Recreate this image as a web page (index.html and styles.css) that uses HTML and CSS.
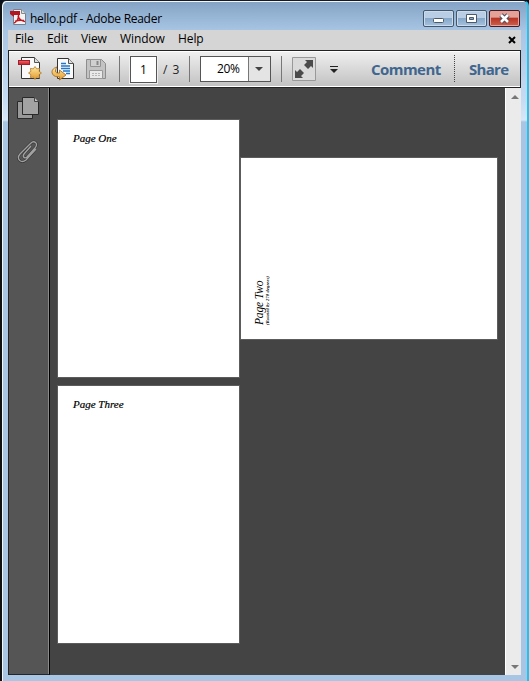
FILE: index.html
```
<!DOCTYPE html>
<html lang="en">
<head>
<meta charset="utf-8">
<title>hello.pdf - Adobe Reader</title>
<link rel="stylesheet" href="styles.css">
</head>
<body>
<div class="window">
  <header class="titlebar">
    <svg class="app-icon" width="17" height="17" viewBox="0 0 17 17">
      <path d="M3.500.5h8l4 4v11h-12z" fill="#f4f4f4" stroke="#77808c"/>
      <path d="M11.500.5v4h4" fill="#ddd" stroke="#888"/>
      <path d="M0 2h10v4H4v2L0 5z" fill="#b31820"/>
      <path d="M4 14c3-1 5-5 4.500-8M8 7c1 3 3 5 7 5.500M5 12.500c3-1.500 6-1.500 9-1" fill="none" stroke="#c4141c" stroke-width="1.500"/>
    </svg>
    <h1 class="title">hello.pdf - Adobe Reader</h1>
    <div class="controls">
      <button class="control" aria-label="Minimize"><svg width="29" height="15"><rect x="9.500" y="7.500" width="10" height="4" rx="1" fill="#fff" stroke="#4d5968"/></svg></button>
      <button class="control" aria-label="Maximize"><svg width="29" height="15"><path d="M9.500 3.500h10v8h-10z" fill="#fff" stroke="#4d5968"/><path d="M12.500 6.500h4v2h-4z" fill="#87a9cb" stroke="#4d5968"/></svg></button>
      <button class="control close" aria-label="Close"><svg width="29" height="15"><path d="M11 4l7 7M18 4l-7 7" stroke="#55505c" stroke-width="4.600"/><path d="M11 4l7 7M18 4l-7 7" stroke="#fff" stroke-width="2.500"/></svg></button>
    </div>
  </header>
  <nav class="menubar">
    <span class="m-file">File</span><span class="m-edit">Edit</span><span class="m-view">View</span><span class="m-window">Window</span><span class="m-help">Help</span>
    <svg class="menu-close" width="8" height="8"><path d="M1 1l6 6M7 1l-6 6" stroke="#000" stroke-width="2"/></svg>
  </nav>
  <div class="toolbar">
    <svg class="tools" width="100" height="34" viewBox="0 0 100 34">
      <defs>
        <linearGradient id="gold" x2="0" y2="1"><stop stop-color="#ffe8a0"/><stop offset="1" stop-color="#e39a2b"/></linearGradient>
        <linearGradient id="red" x2="0" y2="1"><stop stop-color="#f36a6c"/><stop offset="1" stop-color="#c91f2a"/></linearGradient>
      </defs>
      <path d="M12.500 5.500h13l5 5v16h-18z" fill="#fafafa" stroke="#333"/>
      <path d="M25.500 5.500v5h5" fill="#ddd" stroke="#555"/>
      <rect x="9.500" y="8.500" width="11" height="4" fill="url(#red)" stroke="#a3202a"/>
      <path d="M26 14.500l1.700 2.400 2.900-.5-.5 2.900 2.400 1.700-2.400 1.700.5 2.900-2.900-.5L26 27.500l-1.700-2.400-2.900.5.5-2.900-2.400-1.700 2.400-1.700-.5-2.900 2.900.5z" fill="url(#gold)" stroke="#b07a2c" stroke-width=".8"/>
      <path d="M48.500 6.500h11l5 5v15h-16z" fill="#fafafa" stroke="#333"/>
      <path d="M59.500 6.500v5h5" fill="#ddd" stroke="#555"/>
      <path d="M52 11.500h5M52 14h9M52 16.500h9M54 19h7M57 21.500h4" stroke="#2478cc" stroke-width="1.600"/>
      <path d="M48 15c-4 1-6 4-4.500 7 1.200 2.500 4 3 7 2.800V28l6.500-5-6.500-5v3c-2.500.2-4-.3-4-2 0-1.500.5-3 1.500-4z" fill="url(#gold)" stroke="#99641f" stroke-width=".8"/>
      <path d="M77.500 7.500h15l4 4v15h-19z" fill="#c3c3c3" stroke="#8d8d8d"/>
      <path d="M81.500 7.500h10v7h-10z" fill="#d0d0d0" stroke="#929292"/>
      <path d="M88.500 9v4" stroke="#888" stroke-width="2"/>
      <path d="M80.500 18.500h13v8h-13z" fill="#e9e9e9" stroke="#999"/>
      <path d="M83 21.500h8M83 23.500h8" stroke="#b5b5b5" stroke-dasharray="2 1"/>
    </svg>
    <i class="rule r1"></i>
    <span class="page-box">1</span>
    <span class="page-total">/ 3</span>
    <i class="rule r2"></i>
    <span class="zoom"><span class="zoom-value">20%</span><span class="zoom-drop"><svg width="8" height="4"><path d="M0 0h8L4 4z" fill="#444"/></svg></span></span>
    <i class="rule r3"></i>
    <svg class="fit" width="24" height="24"><path d="M.5.5h23v23H.5z" fill="#dadada" stroke="#999"/><path d="M13 3h8v8l-2-2-3 3-4-4 3-3zM3 13l2 2 3-3 4 4-3 3 2 2H3z" fill="#4b4b4b"/></svg>
    <svg class="more" width="8" height="7"><path d="M0 .5h8" stroke="#222"/><path d="M0 3h8L4 7z" fill="#222"/></svg>
    <span class="comment">Comment</span>
    <i class="dots"></i>
    <span class="share">Share</span>
  </div>
  <main class="workspace">
    <aside class="sidebar">
      <svg width="39" height="80">
        <path d="M8.500 13.500h15v17h-15z" fill="#999" stroke="#292929"/>
        <path d="M13.500 9.500h12l4 4v13h-16z" fill="#a3a3a3" stroke="#292929"/>
        <path d="M25.500 9.500v4h4" fill="#c2c2c2" stroke="#444"/>
        <path d="M22 58l-7 8c-2 3 1 5 3 3l8-9c4-5-1-8-4.500-4.500L11 66c-4 5 1 10 6 6l10-11" fill="none" stroke="#343434" stroke-width="2.500"/>
        <path d="M22 58l-7 8c-2 3 1 5 3 3l8-9c4-5-1-8-4.500-4.500L11 66c-4 5 1 10 6 6l10-11" fill="none" stroke="#a1a1a1" stroke-width="1.400"/>
      </svg>
    </aside>
    <section class="document">
      <article class="page one"><p class="heading h-one">Page One</p></article>
      <article class="page two"><div class="rotated"><p class="heading h-two">Page Two</p><p class="caption">(Rotated by 270 degrees)</p></div></article>
      <article class="page three"><p class="heading h-three">Page Three</p></article>
    </section>
    <div class="scrollbar">
      <svg width="8" height="4"><path d="M4 0l4 4H0z" fill="#777"/></svg>
      <svg width="8" height="4"><path d="M0 0h8L4 4z" fill="#777"/></svg>
    </div>
  </main>
</div>
</body>
</html>
```
FILE: styles.css
```
* { box-sizing: border-box; }
body { margin: 0; overflow: hidden; background: #09111c; font: 12px "Open Sans", sans-serif; color: #000; }
svg { display: block; flex: none; }
p, h1 { margin: 0; font-weight: normal; }
.window { width: 529px; height: 681px; padding: 0 6px 6px 6px; border-style: solid; border-width: 1px 2px 0 2px; border-color: #151b25 #19c6ee #19c6ee #111; border-radius: 6px 6px 0 0; background: linear-gradient(#86a5c6 2px, #a8c5e4 30px, #c6dcf3 100px, #d6e7f8 119px, #a8c5e4 121px); box-shadow: inset 1px 1px #f2f7fc; }
.titlebar { display: flex; height: 29px; padding-left: 2px; }
.app-icon { margin-top: 8px; }
.title { width: 134px; margin: 9px 0 0 3px; font-size: 12px; line-height: 18px; letter-spacing: -.28px; white-space: nowrap; }
.controls { display: flex; gap: 2px; margin: 9px 1px 0 auto; }
.control { width: 31px; height: 17px; padding: 0; border: 1px solid #46566b; border-radius: 2px; background: linear-gradient(#b9cee4 0 45%, #87a8c9 50%, #a5c2df); box-shadow: inset 0 0 0 1px #c9dbed; }
.control.close { border-color: #4a1820; background: linear-gradient(#e4a198 0 40%, #b93525 50%, #cd604d); box-shadow: inset 0 0 0 1px #e3a39a; }
.menubar { display: flex; height: 20px; background: #d5d5d5; line-height: 18px; }
.menubar span { white-space: nowrap; letter-spacing: -.1px; }
.m-file { width: 32px; margin-left: 7px; }
.m-edit { width: 34px; }
.m-view { width: 39px; }
.m-window { width: 58px; }
.menu-close { margin: 6px 5px 0 auto; }
.toolbar { display: flex; height: 38px; border: 1px solid #222; background: linear-gradient(#f0f0f0, #c1c1c1); box-shadow: inset 0 1px #fff, inset 0 -1px #fff; }
.tools { margin-top: 1px; }
.rule { width: 1px; height: 26px; margin-top: 5px; background: #777; flex: none; }
.r1 { margin-left: 10px; }
.page-box { width: 27px; height: 27px; margin: 5px 0 0 10px; border: 1px solid #555; background: #fff; text-align: center; line-height: 25px; box-shadow: 0 0 0 1px #eee; }
.page-total { width: 26px; margin: 5px 0 0 6px; line-height: 27px; letter-spacing: 1px; color: #222; }
.zoom { display: flex; width: 71px; height: 26px; margin: 5px 0 0 10px; border: 1px solid #555; background: #fff; line-height: 24px; }
.zoom-value { width: 47px; padding-left: 16px; letter-spacing: -.4px; }
.zoom-drop { width: 22px; border-left: 1px solid #777; background: #e4e4e4; padding: 10px 0 0 6px; }
.r3 { margin-left: 10px; }
.fit { margin: 6px 0 0 10px; }
.more { margin: 15px 0 0 14px; }
.comment, .share { color: #3f668e; font-weight: 700; font-size: 15px; line-height: 36px; white-space: nowrap; }
.comment { width: 69px; margin-left: 33px; letter-spacing: -.55px; }
.dots { width: 1px; height: 28px; margin: 4px 0 0 14px; background: repeating-linear-gradient(#444 0 1px, transparent 1px 2px); }
.share { margin-left: 14px; letter-spacing: -.7px; }
.workspace { display: flex; height: 587px; }
.sidebar { width: 42px; border: 1px solid #252525; border-top: 0; border-right: 1px solid #000; background: #555; box-shadow: inset -1px 0 #8a8a8a; }
.document { display: grid; grid-template-columns: 180.5px 256.5px; grid-template-rows: 257px 257px; column-gap: 2px; row-gap: 9px; width: 455px; padding: 32px 0 0 8px; background: #444; }
.page { background: #fff; box-shadow: 0 0 0 1px #5c5c5c; }
.two { height: 181px; margin-top: 38px; }
.three { grid-column: 1; }
.heading { font: italic 11px "Liberation Serif", serif; -webkit-text-stroke: .2px; white-space: nowrap; }
.h-one, .h-three { padding: 12px 0 0 15px; }
.h-two { font-size: 11.5px; -webkit-text-stroke: 0; letter-spacing: -.15px; }
.rotated { width: 20px; height: 52px; margin: 115px 0 0 12px; writing-mode: vertical-rl; transform: rotate(180deg); display: flex; flex-direction: column; }
.caption { font: italic bold 4.5px/5px "Liberation Serif", serif; letter-spacing: .15px; white-space: nowrap; }
.scrollbar { display: flex; flex-direction: column; justify-content: space-between; width: 16px; padding: 7px 0 6px 5px; border-left: 1px solid #fff; background: #ebebeb; }
```
